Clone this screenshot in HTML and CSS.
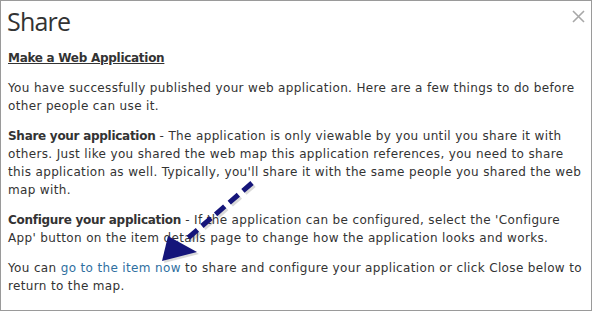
FILE: index.html
```html
<!DOCTYPE html>
<html lang="en">
<head>
	<meta charset="UTF-8">
	<title>Share</title>
	<link rel="stylesheet" href="styles.css">
</head>
<body>
	<div class="dialog">
		<div class="dialog-head">
			<h1 class="dialog-title">Share</h1>
			<svg class="dialog-close" width="13" height="13" viewBox="0 0 13 13">
				<path d="M1 1L12 12M12 1L1 12" stroke="#a8a8a8" stroke-width="1.6" fill="none"/>
			</svg>
		</div>
		<div class="dialog-body">
			<p class="section-title">Make a Web Application</p>
			<p>You have successfully published your web application. Here are a few things to do before other people can use it.</p>
			<p><b>Share your application</b> - The application is only viewable by you until you share it with others. Just like you shared the web map this application references, you need to share this application as well. Typically, you'll share it with the same people you shared the web map with.</p>
			<p><b>Configure your application</b> - If the application can be configured, select the 'Configure App' button on the item details page to change how the application looks and works.</p>
			<p>You can <a href="#">go to the item now</a> to share and configure your application or click Close below to return to the map.</p>
		</div>
		<!-- annotation arrow -->
		<svg class="arrow" width="593" height="313" viewBox="0 0 593 313">
			<g transform="translate(2,2)" opacity="0.22">
				<line x1="252" y1="183" x2="188" y2="238" stroke="#555" stroke-width="5" stroke-dasharray="12 6"/>
				<polygon points="162,261 168,236 197,252" fill="#555"/>
			</g>
			<line x1="252" y1="183" x2="188" y2="238" stroke="#15157a" stroke-width="5" stroke-dasharray="12 6"/>
			<polygon points="162,261 168,236 197,252" fill="#15157a"/>
		</svg>
	</div>
</body>
</html>
```

FILE: styles.css
```css
*{
	margin: 0;
	padding: 0;
	box-sizing: border-box;
}
body{
	background: #fff;
	font-family: "DejaVu Sans", Verdana, sans-serif;
}
.dialog{
	position: relative;
	width: 592px;
	height: 311px;
	border: 1px solid #9a9a9a;
	background: #fff;
	color: #333;
}
.dialog-head{
	display: flex;
	justify-content: space-between;
	align-items: flex-start;
	padding: 3px 6px 0 6px;
}
.dialog-title{
	font-family: "Open Sans", sans-serif;
	font-weight: 400;
	font-size: 25px;
	letter-spacing: -0.8px;
	line-height: 34px;
	color: #333;
}
.dialog-close{
	margin-top: 6px;
}
.dialog-body{
	padding: 11px 7px 0 7px;
	font-size: 12px;
	line-height: 18px;
	letter-spacing: 0.35px;
}
.dialog-body p{
	margin-bottom: 12px;
}
.dialog-body b,
.section-title{
	font-weight: bold;
	letter-spacing: -0.28px;
}
.section-title{
	text-decoration: underline;
}
.dialog-body a{
	color: #2f6f9f;
	text-decoration: none;
}
.arrow{
	position: absolute;
	left: -1px;
	top: -1px;
	pointer-events: none;
}
```
